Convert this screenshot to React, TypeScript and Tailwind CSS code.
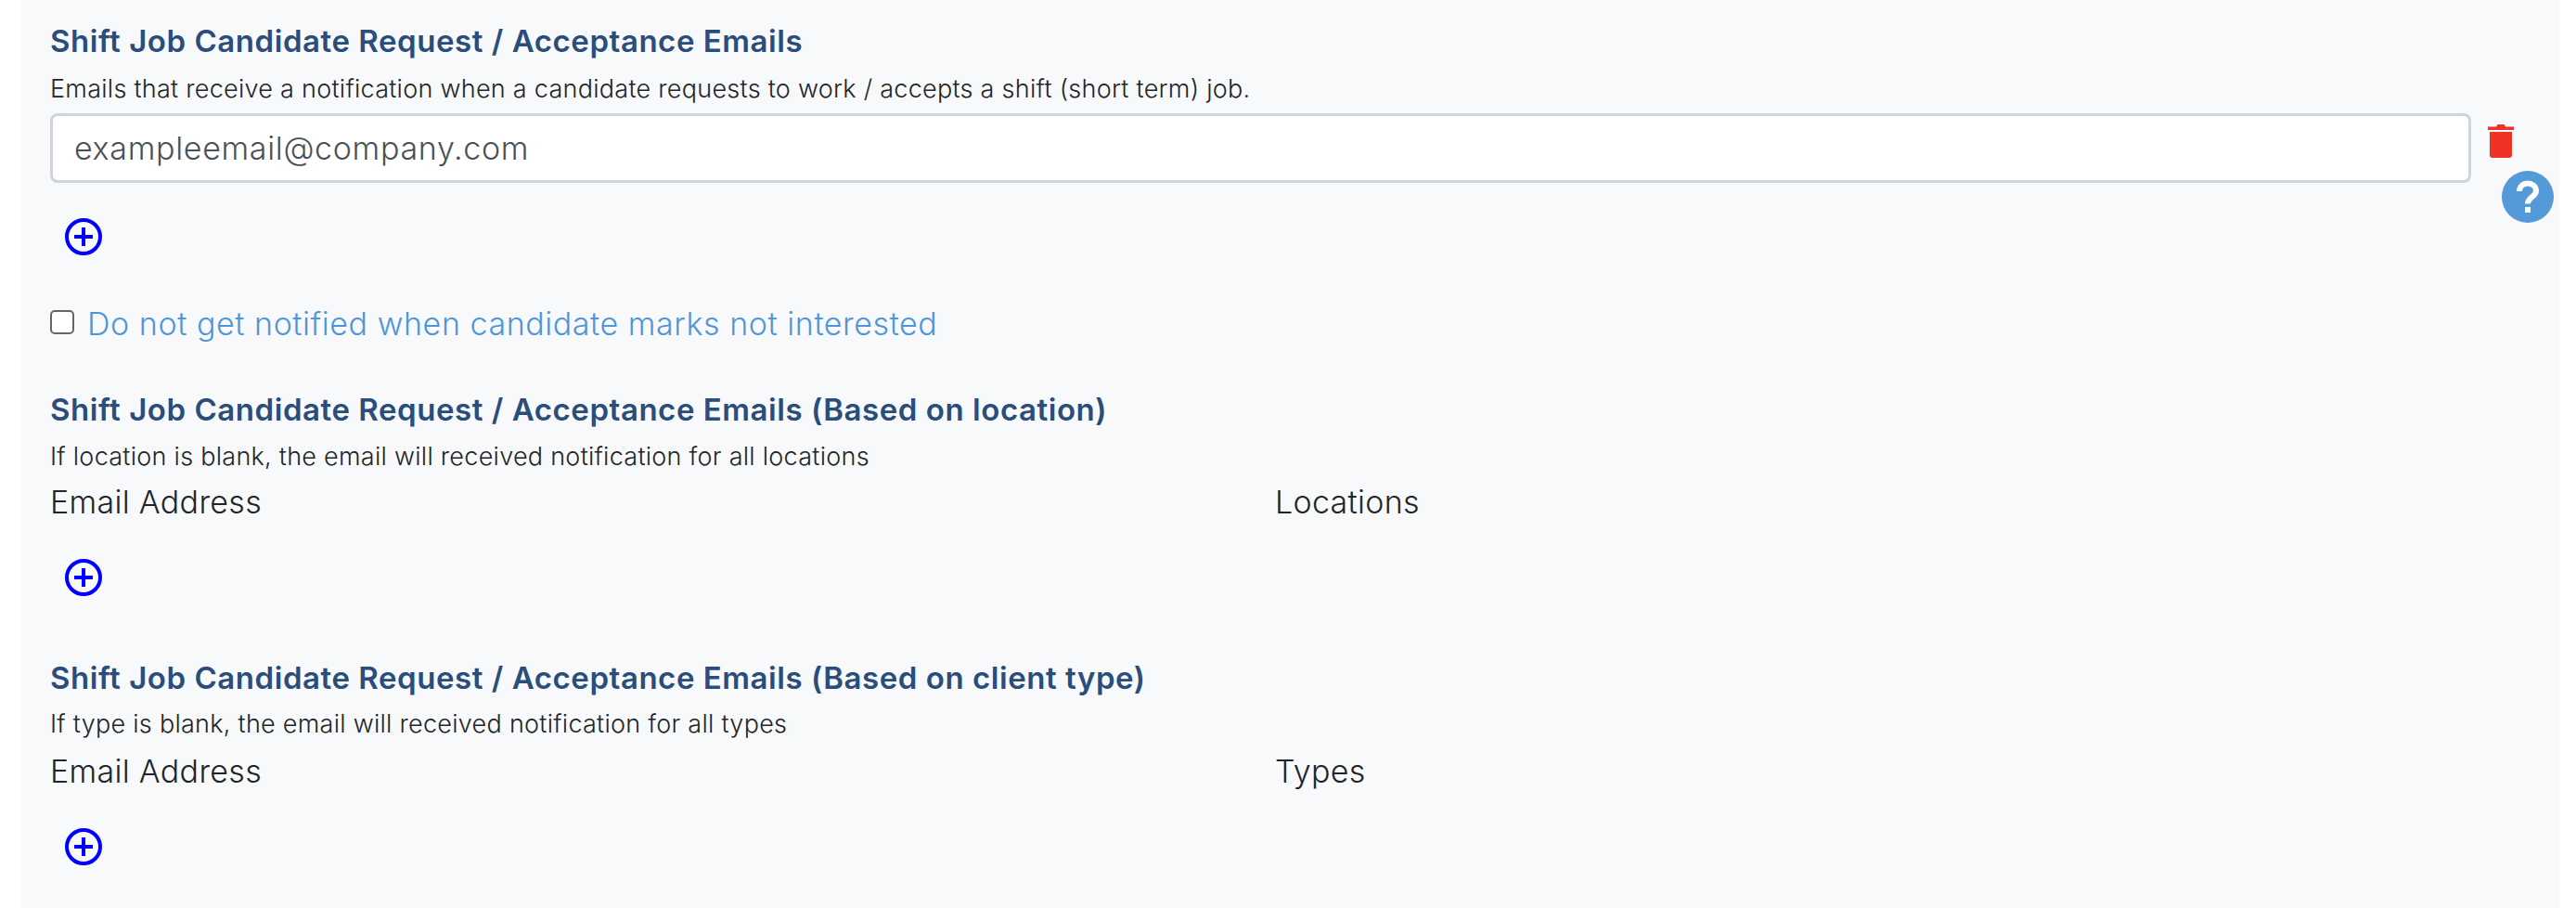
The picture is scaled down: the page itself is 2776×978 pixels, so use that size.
import React from 'react';

const font = "font-['Inter','Liberation_Sans',sans-serif]";

const AddButton: React.FC = () => (
  <button type="button" className="block w-[40px] h-[40px] ml-[16px]">
    <svg viewBox="0 0 40 40" className="w-[40px] h-[40px]" fill="none" stroke="#0000ff">
      <circle cx="20" cy="20" r="18" strokeWidth="4" />
      <path d="M20 10v20M10 20h20" strokeWidth="4" />
    </svg>
  </button>
);

const Trash: React.FC = () => (
  <svg viewBox="0 0 28 36" className="w-[28px] h-[36px]" fill="#ee3324">
    <path d="M0 2.500h9L10.500 0h7L19 2.500h9V6H0z" />
    <path d="M2 8h24v25c0 1.700-1.300 3-3 3H5c-1.700 0-3-1.300-3-3z" />
  </svg>
);

const Heading: React.FC<{ children: React.ReactNode }> = ({ children }) => (
  <h2 className="text-[33px] leading-[40px] font-semibold tracking-[0.55px] text-[#2a4d7c]">{children}</h2>
);

const Hint: React.FC<{ children: React.ReactNode }> = ({ children }) => (
  <p className="text-[27px] leading-[36px] font-light tracking-[0.27px] text-[#212529]">{children}</p>
);

const Columns: React.FC<{ second: string }> = ({ second }) => (
  <div className="grid grid-cols-[1320px_1fr] text-[34px] leading-[40px] font-light tracking-[0.3px] text-[#212529]">
    <span>Email Address</span>
    <span>{second}</span>
  </div>
);

export default function App() {
  return (
    <div className={`${font} w-[2776px] h-[978px] bg-white overflow-hidden`}>
      <div className="relative ml-[22px] w-[2736px] h-[978px] bg-[#f8f9fb] pl-[32px] pt-[24px]">
        <Heading>Shift Job Candidate Request / Acceptance Emails</Heading>
        <div className="mt-[14px]">
          <Hint>Emails that receive a notification when a candidate requests to work / accepts a shift (short term) job.</Hint>
        </div>
        <div className="mt-[8px] flex items-start">
          <input
            readOnly
            value="exampleemail@company.com"
            className="w-[2609px] h-[75px] px-[23px] bg-white border-[3px] border-[#ced4da] rounded-[8px] text-[34px] font-light tracking-[0.67px] text-[#495057] outline-none"
          />
          <div className="ml-[18px] mt-[12px]">
            <Trash />
          </div>
        </div>
        <div className="mt-[38px]">
          <AddButton />
        </div>
        <label className="mt-[54px] flex items-center h-[40px]">
          <input type="checkbox" className="appearance-none w-[26px] h-[26px] m-0 -mt-[5px] bg-white border-2 border-[#666666] rounded-[5px]" />
          <span className="ml-[14px] text-[34px] leading-[40px] font-light tracking-[0.56px] text-[#4f96d9]">
            Do not get notified when candidate marks not interested
          </span>
        </label>

        <div className="mt-[52px]">
          <Heading>Shift Job Candidate Request / Acceptance Emails (Based on location)</Heading>
        </div>
        <div className="mt-[13px]">
          <Hint>If location is blank, the email will received notification for all locations</Hint>
        </div>
        <div className="mt-[11px]">
          <Columns second="Locations" />
        </div>
        <div className="mt-[41px]">
          <AddButton />
        </div>

        <div className="pt-[68px]">
          <Heading>Shift Job Candidate Request / Acceptance Emails (Based on client type)</Heading>
        </div>
        <div className="mt-[12px]">
          <Hint>If type is blank, the email will received notification for all types</Hint>
        </div>
        <div className="mt-[13px]">
          <Columns second="Types" />
        </div>
        <div className="mt-[41px]">
          <AddButton />
        </div>

        {/* floating help button */}
        <button type="button" className="absolute left-[2674px] top-[184px] w-[56px] h-[56px] rounded-full bg-[#5499d8] flex items-center justify-center">
          <svg viewBox="0 0 56 56" className="w-[56px] h-[56px]" fill="none">
            <path d="M19 22c0-5 4-8.500 9-8.500s9 3.300 9 8c0 6.500-9 7-9 14" stroke="#ffffff" strokeWidth="6" />
            <rect x="25" y="39" width="6" height="6" fill="#ffffff" />
          </svg>
        </button>
      </div>
    </div>
  );
}
